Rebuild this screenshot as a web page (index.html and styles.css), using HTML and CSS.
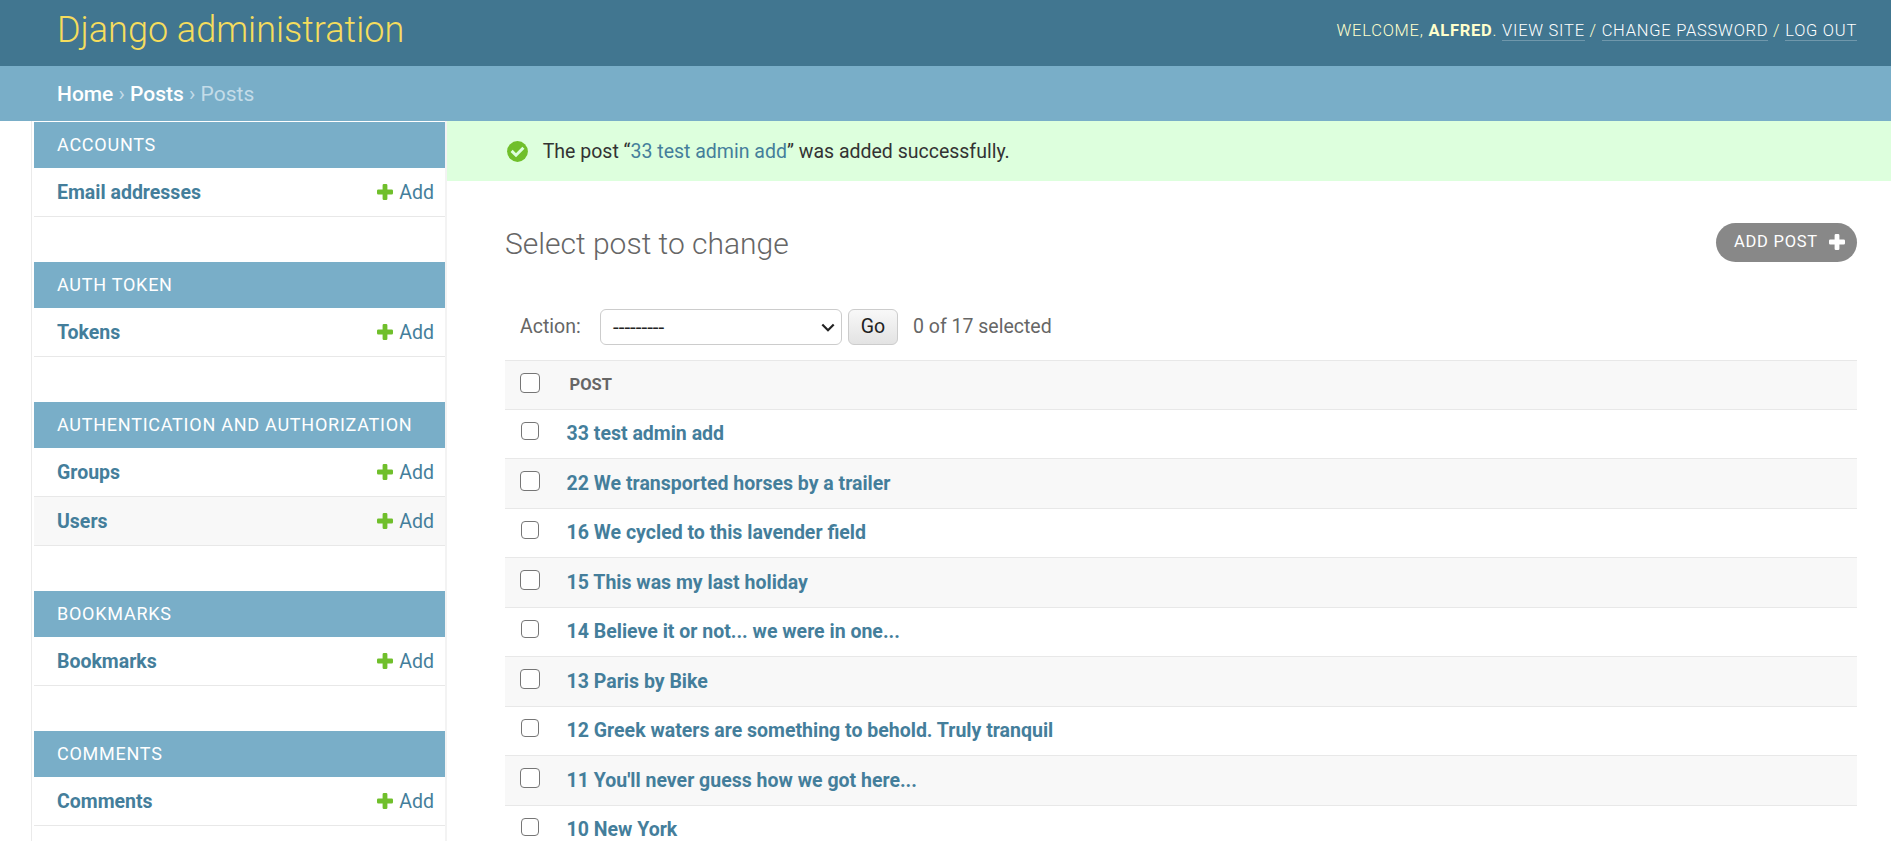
FILE: index.html
```html
<!DOCTYPE html>
<html lang="en">
<head>
<meta charset="utf-8">
<title>Select post to change | Django site admin</title>
<link rel="stylesheet" href="styles.css">
</head>
<body>
<svg class="defs" aria-hidden="true">
  <symbol id="plus" viewBox="0 0 16 16"><path d="M5.6 1.3Q5.6 0 6.9 0H9.1Q10.4 0 10.4 1.3V5.5H14.7Q16 5.5 16 6.8V9.2Q16 10.5 14.7 10.5H10.4V14.7Q10.4 16 9.1 16H6.9Q5.6 16 5.6 14.7V10.5H1.3Q0 10.5 0 9.2V6.8Q0 5.5 1.3 5.5H5.6Z"/></symbol>
</svg>
<header class="header">
  <h1 class="site-name">Django administration</h1>
  <div class="user-tools">Welcome, <strong>Alfred</strong>. <a>View site</a> / <a>Change password</a> / <a>Log out</a></div>
</header>
<nav class="breadcrumbs"><a>Home</a> › <a>Posts</a> › Posts</nav>
<div class="main">
  <aside class="sidebar">
    <section class="module"><h2 class="caption">Accounts</h2>
      <div class="model"><a class="model-name">Email addresses</a><a class="add"><svg class="plus"><use href="#plus"/></svg>Add</a></div>
    </section>
    <section class="module"><h2 class="caption">Auth Token</h2>
      <div class="model"><a class="model-name">Tokens</a><a class="add"><svg class="plus"><use href="#plus"/></svg>Add</a></div>
    </section>
    <section class="module"><h2 class="caption">Authentication and Authorization</h2>
      <div class="model"><a class="model-name">Groups</a><a class="add"><svg class="plus"><use href="#plus"/></svg>Add</a></div>
      <div class="model alt"><a class="model-name">Users</a><a class="add"><svg class="plus"><use href="#plus"/></svg>Add</a></div>
    </section>
    <section class="module"><h2 class="caption">Bookmarks</h2>
      <div class="model"><a class="model-name">Bookmarks</a><a class="add"><svg class="plus"><use href="#plus"/></svg>Add</a></div>
    </section>
    <section class="module"><h2 class="caption">Comments</h2>
      <div class="model"><a class="model-name">Comments</a><a class="add"><svg class="plus"><use href="#plus"/></svg>Add</a></div>
    </section>
  </aside>
  <main class="content-area">
    <div class="message">
      <svg class="tick" viewBox="0 0 21 21"><circle cx="10.5" cy="10.5" r="10.4" fill="#70bf2b"/><path d="M4.6 9.9 9 14.2l7.4-7.4" fill="none" stroke="#ddffdd" stroke-width="3"/></svg>
      <span>The post “<a>33 test admin add</a>” was added successfully.</span>
    </div>
    <div class="content">
      <div class="title-row">
        <h2 class="title">Select post to change</h2>
        <a class="add-post">Add post<svg class="plus"><use href="#plus"/></svg></a>
      </div>
      <div class="actions">
        <label class="action-label">Action:</label>
        <div class="select"><span>---------</span><svg class="chevron" viewBox="0 0 14 9"><path d="M1.3 1.5 7 7.2l5.7-5.7" fill="none" stroke="#222" stroke-width="2.2"/></svg></div>
        <button class="go">Go</button>
        <span class="counter">0 of 17 selected</span>
      </div>
      <div class="results">
        <div class="row head"><span class="check"></span><span class="column-name">Post</span></div>
        <div class="row"><span class="check"></span><a>33 test admin add</a></div>
        <div class="row"><span class="check"></span><a>22 We transported horses by a trailer</a></div>
        <div class="row"><span class="check"></span><a>16 We cycled to this lavender field</a></div>
        <div class="row"><span class="check"></span><a>15 This was my last holiday</a></div>
        <div class="row"><span class="check"></span><a>14 Believe it or not... we were in one...</a></div>
        <div class="row"><span class="check"></span><a>13 Paris by Bike</a></div>
        <div class="row"><span class="check"></span><a>12 Greek waters are something to behold. Truly tranquil</a></div>
        <div class="row"><span class="check"></span><a>11 You'll never guess how we got here...</a></div>
        <div class="row"><span class="check"></span><a>10 New York</a></div>
      </div>
    </div>
  </main>
</div>
</body>
</html>
```
FILE: styles.css
```css
* { box-sizing: border-box; }
html, body { height: 100%; }
body {
  margin: 0;
  overflow: hidden;
  display: flex;
  flex-direction: column;
  background: #fff;
  color: #333;
  font: 19.5px/24px Roboto, sans-serif;
}
h1, h2 { margin: 0; }
a { color: #447e9b; }
.defs { display: none; }
.plus { flex: none; width: 16px; height: 16px; fill: #70bf2b; }

.header {
  flex: none;
  display: flex;
  justify-content: space-between;
  align-items: flex-start;
  height: 66px;
  padding: 0 34px 0 57px;
  background: #417690;
  color: #ffc;
}
.site-name {
  padding-top: 9px;
  color: #f5dd5d;
  font-size: 36px;
  line-height: 42px;
  font-weight: 300;
}
.user-tools {
  padding-top: 19px;
  font-size: 16.5px;
  font-weight: 300;
  letter-spacing: .75px;
  text-transform: uppercase;
}
.user-tools strong { font-weight: 700; }
.user-tools a { color: #fff; border-bottom: 1px solid rgba(255, 255, 255, .25); }

.breadcrumbs {
  flex: none;
  height: 55px;
  padding: 16px 57px 14px;
  background: #79aec8;
  color: #c4dce8;
  font-size: 21px;
}
.breadcrumbs a { color: #fff; font-weight: 500; }

.main { flex: 1; min-height: 0; display: flex; overflow: hidden; }
.sidebar {
  flex: none;
  width: 416px;
  margin-left: 31px;
  padding: 1px 0 0 2px;
  border-left: 1px solid #eaeaea;
  border-right: 2px solid #f3f3f3;
}
.module { margin-bottom: 45px; }
.caption {
  height: 46px;
  padding: 0 23px;
  background: #79aec8;
  color: #fff;
  font-size: 18px;
  line-height: 45px;
  font-weight: 400;
  letter-spacing: .75px;
  text-transform: uppercase;
  white-space: nowrap;
}
.model {
  display: flex;
  justify-content: space-between;
  align-items: center;
  height: 49px;
  padding: 1px 11px 0 23px;
  border-bottom: 1px solid #e8e8e8;
}
.alt { background: #f8f8f8; }
.model-name { font-weight: 700; }
.add { display: flex; align-items: center; gap: 6px; }
.add .plus { margin-bottom: 1px; }

.content-area { flex: 1; min-width: 0; }
.message {
  display: flex;
  align-items: center;
  gap: 15px;
  height: 60px;
  padding: 1px 0 0 59.7px;
  background: #dfd;
}
.tick { width: 21px; height: 21px; margin-bottom: 1px; }
.content { padding: 42px 34px 0 58px; }
.title-row { display: flex; justify-content: space-between; align-items: flex-start; }
.title { padding-top: 3px; color: #666; font-size: 30px; line-height: 36px; font-weight: 300; }
.add-post {
  display: flex;
  align-items: center;
  justify-content: space-between;
  width: 141px;
  height: 39px;
  padding: 0 12px 2px 18px;
  border-radius: 20px;
  background: #888;
  color: #fff;
  font-size: 16.5px;
  letter-spacing: .75px;
  text-transform: uppercase;
}
.add-post .plus { fill: #fff; }
.actions {
  display: flex;
  align-items: center;
  height: 36px;
  margin: 47px 0 15px;
  padding-left: 15px;
  color: #666;
}
.action-label { width: 80px; }
.select {
  display: flex;
  align-items: center;
  justify-content: space-between;
  width: 242px;
  height: 36px;
  padding: 0 6px 0 12px;
  border: 1px solid #ccc;
  border-radius: 6px;
  color: #222;
  font-size: 20.6px;
}
.chevron { width: 14px; height: 9px; }
.go {
  width: 50px;
  height: 36px;
  margin: 0 15px 0 6px;
  padding: 0;
  border: 1px solid #ccc;
  border-radius: 6px;
  background: linear-gradient(#f8f8f8, #e3e3e3);
  color: #222;
  font: inherit;
}

.results { border-top: 1px solid #e8e8e8; }
.row {
  display: grid;
  grid-template-columns: 61.6px 1fr;
  height: 49.5px;
  padding-top: 12.5px;
  border-bottom: 1px solid #e8e8e8;
}
.row a { font-weight: 700; }
.row:nth-child(odd) { background: #f8f8f8; }
.head { height: 48.5px; padding-top: 12px; }
.check {
  width: 18px;
  height: 18px;
  margin-left: 16px;
  border: 1px solid #767676;
  border-radius: 4px;
  background: #fff;
}
.row:nth-child(odd) .check { width: 20px; height: 20px; margin: -1px 0 0 15px; }
.head.row:nth-child(odd) .check { margin-top: 0; }
.column-name {
  padding-left: 3px;
  color: #666;
  font-size: 16.5px;
  font-weight: 700;
  text-transform: uppercase;
}
```
